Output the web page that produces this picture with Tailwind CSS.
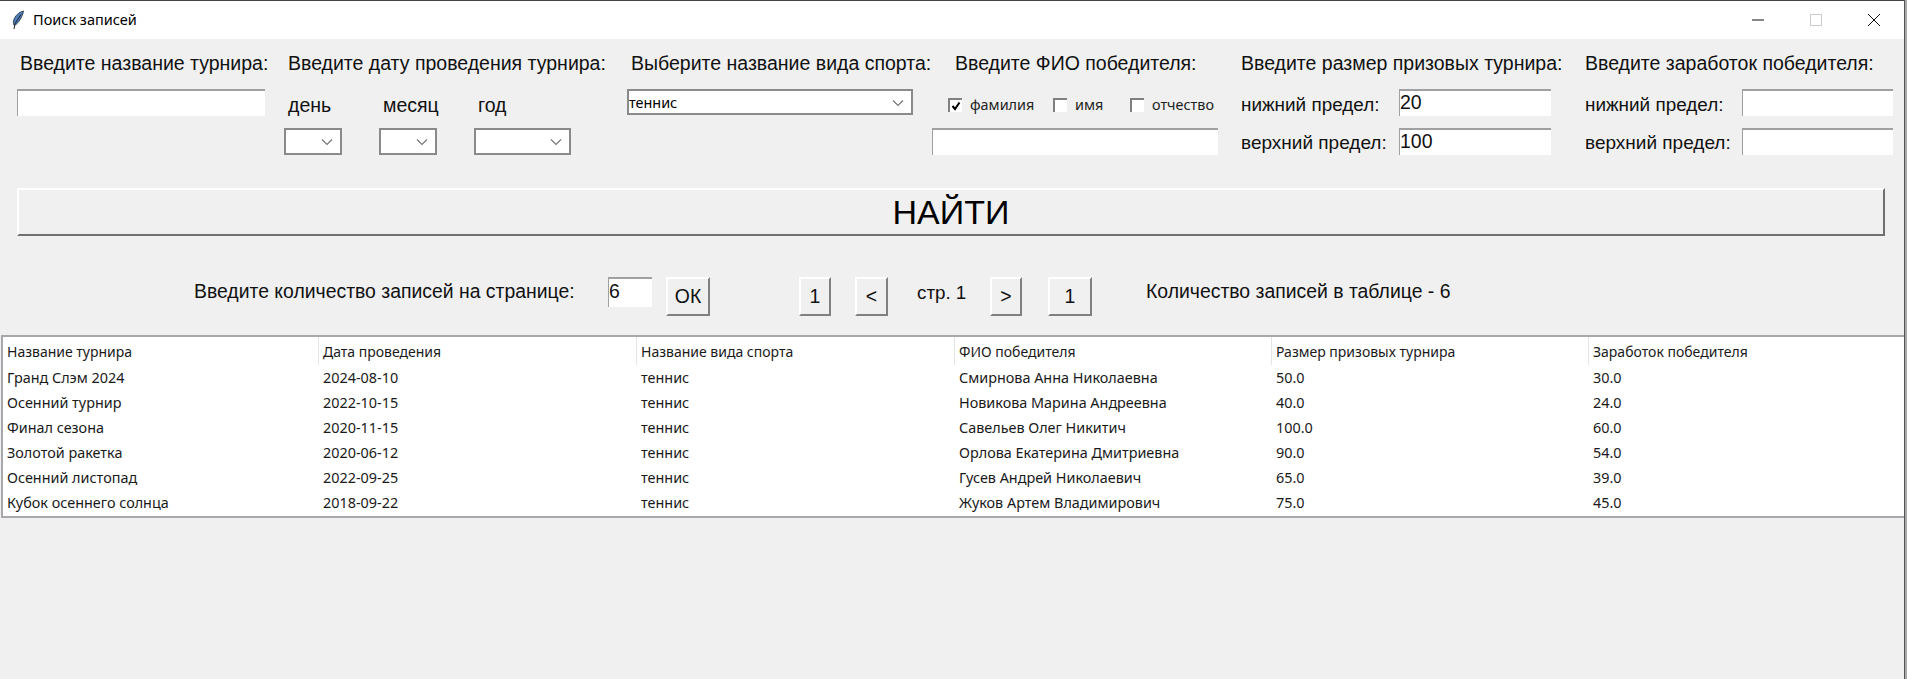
<!DOCTYPE html>
<html lang="ru">
<head>
<meta charset="utf-8">
<title>Поиск записей</title>
<script src="https://cdn.jsdelivr.net/npm/@tailwindcss/browser@4"></script>
</head>
<body class="w-[1907px] h-[679px] overflow-hidden flex bg-[#f0f0f0] font-['Liberation_Sans',sans-serif] text-[19.5px] text-[#111]">
<main class="w-[1904px] shrink-0">
<header class="h-[39px] bg-white border-t border-[#444] flex items-center">
  <svg class="ml-[11px] w-[14px] h-[20px]" viewBox="0 0 14 20"><path d="M12.500 1C8 2 3.500 6 2.500 11c-.4 2 .2 3.500 .8 4.500C7 14 11.500 7 12.500 1Z" fill="#4f7fb8" stroke="#1c2b3c" stroke-width=".8"/><path d="M10 4.500 4 13.500 3 19" fill="none" stroke="#222" stroke-width="1"/></svg>
  <span class="ml-[8px] font-['Noto_Sans',sans-serif] text-[14.5px] text-black">Поиск записей</span>
  <div class="ml-auto flex items-center">
    <svg class="w-[14px] h-[14px] mr-[44px]" viewBox="0 0 14 14"><path d="M1 7h12" stroke="#111" stroke-width="1"/></svg>
    <svg class="w-[14px] h-[14px] mr-[44px]" viewBox="0 0 14 14"><rect x="1.500" y="1.500" width="11" height="11" fill="none" stroke="#ccc"/></svg>
    <svg class="w-[14px] h-[14px] mr-[23px]" viewBox="0 0 14 14"><path d="M1 1l12 12M13 1 1 13" stroke="#111" stroke-width="1"/></svg>
  </div>
</header>

<section class="grid grid-cols-[267px_343px_305px_309px_344px_319px] grid-rows-[50px_39px_39px] pl-[17px]">
  <div class="flex items-center pl-[3px] whitespace-nowrap">Введите название турнира:</div>
  <div class="flex items-center pl-[4px] whitespace-nowrap">Введите дату проведения турнира:</div>
  <div class="flex items-center pl-[4px] whitespace-nowrap">Выберите название вида спорта:</div>
  <div class="flex items-center pl-[23px] whitespace-nowrap">Введите ФИО победителя:</div>
  <div class="flex items-center whitespace-nowrap">Введите размер призовых турнира:</div>
  <div class="flex items-center whitespace-nowrap">Введите заработок победителя:</div>

  <div class="h-[27px] w-[248px] bg-white border-t-2 border-l border-[#a0a0a0]"></div>
  <div class="grid grid-cols-[95px_95px_95px] items-center h-[33px]">
    <span class="pl-[4px]">день</span><span class="pl-[4px]">месяц</span><span class="pl-[4px]">год</span>
  </div>
  <div class="h-[26px] w-[286px] bg-white border-2 border-[#8a8a8a] flex items-center pt-[1px] font-['Noto_Sans',sans-serif] text-[14.4px] text-black">теннис
    <svg class="ml-auto mr-[7px] w-[12px] h-[8px]" viewBox="0 0 12 8"><path d="M1 1.500 6 6.500 11 1.500" fill="none" stroke="#777" stroke-width="1.200"/></svg>
  </div>
  <div class="flex items-center h-[32px] font-['Noto_Sans',sans-serif] text-[14.4px] text-[#222] pl-[16px]">
    <span class="w-[14px] h-[14px] bg-white border-t-2 border-l-2 border-[#808080] flex items-center justify-center"><svg class="w-[10px] h-[10px]" viewBox="0 0 10 10"><path d="M1.500 5 4 8 8.500 1.500" fill="none" stroke="#000" stroke-width="2"/></svg></span>
    <span class="ml-[8px] w-[83px]">фамилия</span>
    <span class="w-[14px] h-[14px] bg-white border-t-2 border-l-2 border-[#808080]"></span>
    <span class="ml-[8px] w-[55px]">имя</span>
    <span class="w-[14px] h-[14px] bg-white border-t-2 border-l-2 border-[#808080]"></span>
    <span class="ml-[8px]">отчество</span>
  </div>
  <div class="flex items-start text-[18.9px]">
    <span class="w-[158px] h-[32px] flex items-center">нижний предел:</span>
    <div class="h-[27px] w-[152px] bg-white border-t-2 border-l border-[#a0a0a0] flex items-center pb-[2px] text-[19.5px]">20</div>
  </div>
  <div class="flex items-start text-[18.9px]">
    <span class="w-[157px] h-[32px] flex items-center">нижний предел:</span>
    <div class="h-[27px] w-[151px] bg-white border-t-2 border-l border-[#a0a0a0]"></div>
  </div>

  <div></div>
  <div class="flex items-start">
    <div class="h-[27px] w-[58px] mr-[37px] bg-white border-2 border-[#8a8a8a] flex items-center justify-end pr-[7px]"><svg class="w-[12px] h-[8px]" viewBox="0 0 12 8"><path d="M1 1.500 6 6.500 11 1.500" fill="none" stroke="#777" stroke-width="1.200"/></svg></div>
    <div class="h-[27px] w-[58px] mr-[37px] bg-white border-2 border-[#8a8a8a] flex items-center justify-end pr-[7px]"><svg class="w-[12px] h-[8px]" viewBox="0 0 12 8"><path d="M1 1.500 6 6.500 11 1.500" fill="none" stroke="#777" stroke-width="1.200"/></svg></div>
    <div class="h-[27px] w-[97px] bg-white border-2 border-[#8a8a8a] flex items-center justify-end pr-[7px]"><svg class="w-[12px] h-[8px]" viewBox="0 0 12 8"><path d="M1 1.500 6 6.500 11 1.500" fill="none" stroke="#777" stroke-width="1.200"/></svg></div>
  </div>
  <div></div>
  <div class="h-[27px] w-[286px] bg-white border-t-2 border-l border-[#a0a0a0]"></div>
  <div class="flex items-start text-[19px]">
    <span class="w-[158px] h-[30px] flex items-center">верхний предел:</span>
    <div class="h-[27px] w-[152px] bg-white border-t-2 border-l border-[#a0a0a0] flex items-center pb-[2px] text-[19.5px]">100</div>
  </div>
  <div class="flex items-start text-[19px]">
    <span class="w-[157px] h-[30px] flex items-center">верхний предел:</span>
    <div class="h-[27px] w-[151px] bg-white border-t-2 border-l border-[#a0a0a0]"></div>
  </div>
</section>

<button class="block mt-[21px] ml-[17px] w-[1868px] h-[48px] bg-[#f0f0f0] border-2 border-t-white border-l-white border-r-[#707070] border-b-[#707070] text-[34px] leading-none text-black">НАЙТИ</button>

<section class="mt-[41px] h-[58px] pl-[194px] flex items-start text-[19.4px]">
  <span class="w-[414px] h-[30px] flex items-center">Введите количество записей на странице:</span>
  <div class="w-[44px] h-[30px] bg-white border-t-2 border-l border-[#a0a0a0] flex items-center pb-[2px]">6</div>
  <button class="ml-[14px] w-[44px] h-[39px] border-2 border-t-white border-l-white border-r-[#808080] border-b-[#808080]">ОК</button>
  <button class="ml-[89px] w-[32px] h-[39px] border-2 border-t-white border-l-white border-r-[#808080] border-b-[#808080]">1</button>
  <button class="ml-[24px] w-[33px] h-[39px] border-2 border-t-white border-l-white border-r-[#808080] border-b-[#808080]">&lt;</button>
  <span class="ml-[29px] w-[73px] h-[32px] flex items-center text-[18.8px]">стр. 1</span>
  <button class="w-[32px] h-[39px] border-2 border-t-white border-l-white border-r-[#808080] border-b-[#808080]">&gt;</button>
  <button class="ml-[26px] w-[44px] h-[39px] border-2 border-t-white border-l-white border-r-[#808080] border-b-[#808080]">1</button>
  <span class="ml-[54px] h-[30px] flex items-center whitespace-nowrap">Количество записей в таблице - 6</span>
</section>

<section class="ml-[1px] h-[183px] bg-white border-y-2 border-l-2 border-[#a8a8ac] font-['Noto_Sans',sans-serif] text-[14.4px] text-[#1a1a1a]">
  <div class="h-[28px] grid grid-cols-[316px_318px_318px_317px_317px_1fr] items-center text-[14px]">
    <span class="pl-[4px] h-full flex items-center border-r border-[#e5e5e5]">Название турнира</span>
    <span class="pl-[4px] h-full flex items-center border-r border-[#e5e5e5]">Дата проведения</span>
    <span class="pl-[4px] h-full flex items-center border-r border-[#e5e5e5]">Название вида спорта</span>
    <span class="pl-[4px] h-full flex items-center border-r border-[#e5e5e5]">ФИО победителя</span>
    <span class="pl-[4px] h-full flex items-center border-r border-[#e5e5e5]">Размер призовых турнира</span>
    <span class="pl-[4px] h-full flex items-center">Заработок победителя</span>
  </div>
  <div class="grid grid-cols-[316px_318px_318px_317px_317px_1fr] auto-rows-[25px] items-center [&>span]:pl-[4px]">
    <span>Гранд Слэм 2024</span><span>2024-08-10</span><span>теннис</span><span>Смирнова Анна Николаевна</span><span>50.0</span><span>30.0</span>
    <span>Осенний турнир</span><span>2022-10-15</span><span>теннис</span><span>Новикова Марина Андреевна</span><span>40.0</span><span>24.0</span>
    <span>Финал сезона</span><span>2020-11-15</span><span>теннис</span><span>Савельев Олег Никитич</span><span>100.0</span><span>60.0</span>
    <span>Золотой ракетка</span><span>2020-06-12</span><span>теннис</span><span>Орлова Екатерина Дмитриевна</span><span>90.0</span><span>54.0</span>
    <span>Осенний листопад</span><span>2022-09-25</span><span>теннис</span><span>Гусев Андрей Николаевич</span><span>65.0</span><span>39.0</span>
    <span>Кубок осеннего солнца</span><span>2018-09-22</span><span>теннис</span><span>Жуков Артем Владимирович</span><span>75.0</span><span>45.0</span>
  </div>
</section>
</main>
<aside class="w-[3px] h-full bg-[#a8a8a8] border-l border-[#555]"></aside>
</body>
</html>
